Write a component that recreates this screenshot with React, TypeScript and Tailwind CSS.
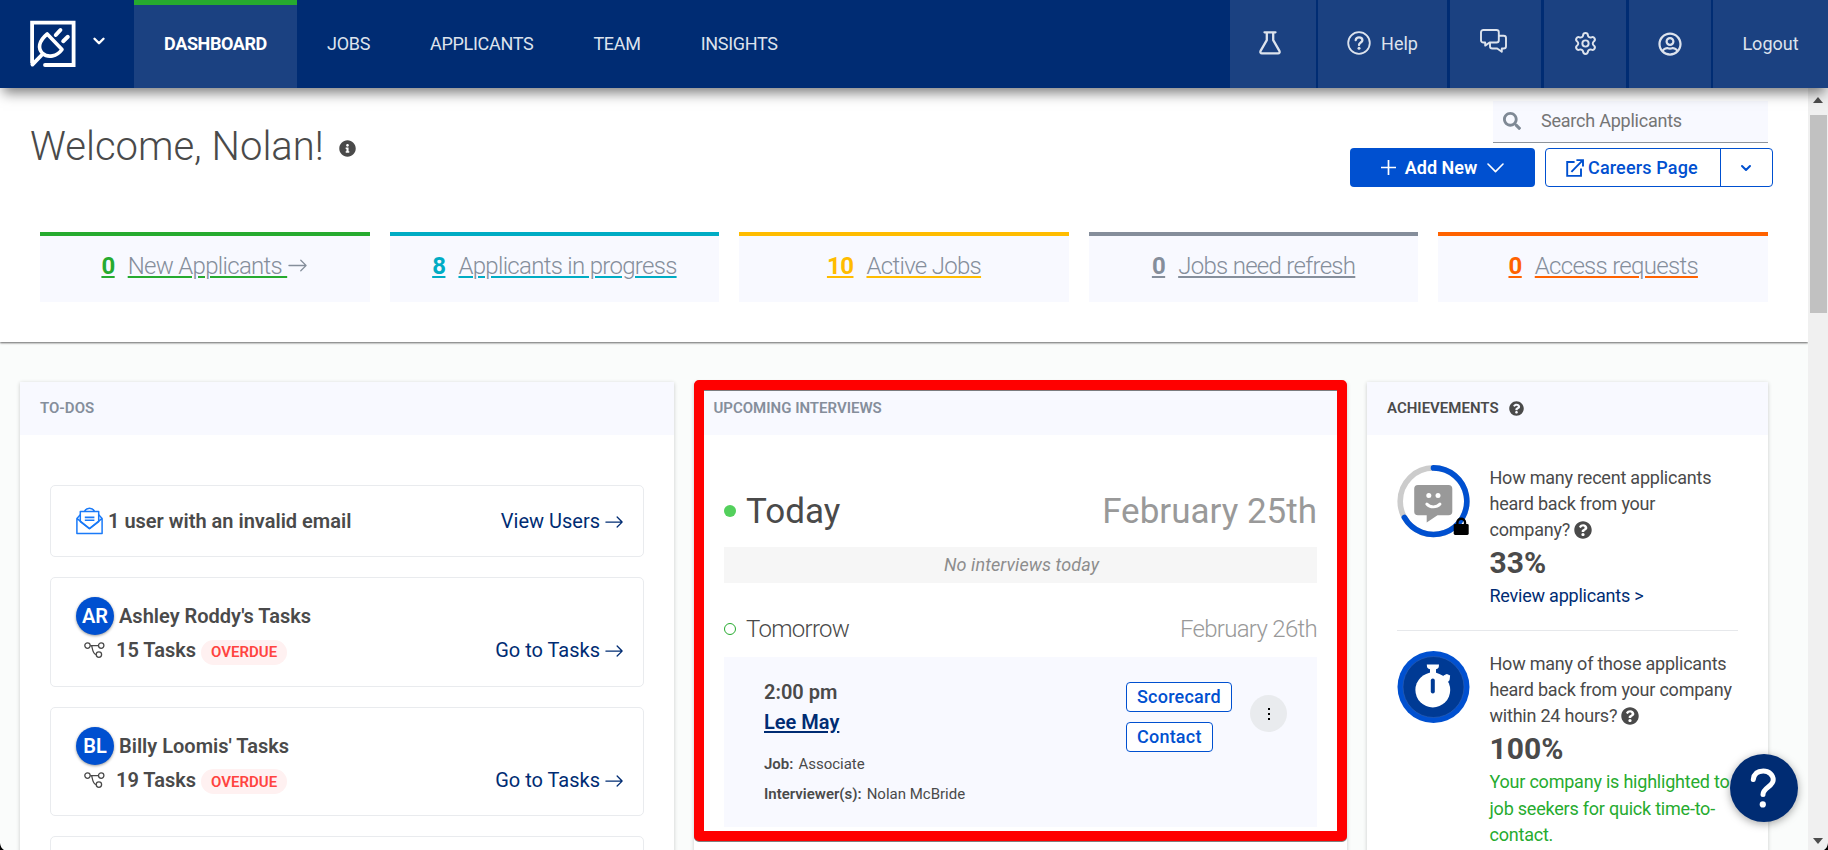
import React from "react";
import { FaInfoCircle, FaQuestionCircle, FaSearch, FaRegUserCircle } from "react-icons/fa";
import { BsArrowRight } from "react-icons/bs";
import { ChevronDown, Settings } from "lucide-react";

function Logo() {
  return (
    <svg viewBox="0 0 48 50" className="h-[50px] w-[48px]" fill="none" stroke="#fff" strokeLinecap="round" strokeLinejoin="round">
      <path d="M16 46H44.6V3.6H3.1V44.5" strokeWidth="3.8" strokeLinecap="butt" strokeLinejoin="miter" />
      <path d="M16 46H44M3.4 45.6L12.5 36.2" strokeWidth="3.8" />
      <path d="M18.2 15L33 30.5C28 37.5 19 39.2 13.6 34.4C8.6 29.4 9.4 22.4 18.2 15Z" strokeWidth="3.6" />
      <path d="M26.8 16L31.4 11M34.2 22.2L38.8 17.8" strokeWidth="4" />
    </svg>
  );
}

function Flask() {
  return (
    <svg viewBox="0 0 22 24" className="h-6 w-[22px]" fill="none" stroke="currentColor" strokeWidth="2.3" strokeLinecap="round" strokeLinejoin="round">
      <path d="M5.5 1.3H16.5M7.8 1.5V9.2L1.6 19.8C1 21.4 1.6 22.4 3 22.4H19C20.4 22.4 21 21.4 20.4 19.8L14.2 9.2V1.5" />
    </svg>
  );
}

function HelpCircle() {
  return (
    <svg viewBox="0 0 24 24" className="h-6 w-6" fill="none" stroke="currentColor" strokeWidth="1.8" strokeLinecap="round">
      <circle cx="12" cy="12" r="10.8" />
      <path d="M8.7 9.2C9 7.2 10.3 6.4 12 6.4C13.9 6.4 15.4 7.4 15.4 9.2C15.4 11.5 12 11.5 12 14" strokeWidth="2.3" />
      <circle cx="12" cy="17.3" r="1.5" fill="currentColor" stroke="none" />
    </svg>
  );
}

function Chats() {
  return (
    <svg viewBox="0 0 27 24" className="h-6 w-[27px]" fill="none" stroke="currentColor" strokeWidth="1.9" strokeLinejoin="round">
      <path d="M3.4 1H16.4C17.9 1 18.8 1.9 18.8 3.3V11.2C18.8 12.6 17.9 13.5 16.4 13.5H9.6L5.2 16.6V13.5H3.4C1.9 13.5 1 12.6 1 11.2V3.3C1 1.9 1.9 1 3.4 1Z" />
      <path d="M19 6.8H23.6C25.1 6.8 26 7.7 26 9.1V17.2C26 18.6 25.1 19.5 23.6 19.5H21.8V22.8L17.2 19.5H12.4C10.9 19.5 10 18.6 10 17.2V13.8" />
    </svg>
  );
}

function ExternalLink() {
  return (
    <svg viewBox="0 0 18 18" className="h-[18px] w-[18px]" fill="none" stroke="currentColor" strokeWidth="1.9">
      <path d="M8.6 3H1.2V16.9H15V9.4" />
      <path d="M5.4 12.8L16.6 1.4M10.4 1.1H17V7.6" />
    </svg>
  );
}

function Envelope() {
  return (
    <svg viewBox="0 0 27 28" className="h-7 w-[27px]" fill="none" stroke="#1a7af8" strokeWidth="1.5" strokeLinejoin="round">
      <path d="M4.3 4.4H22.7V14.6L13.5 21.6L4.3 14.6Z" />
      <path d="M4.3 7.8L.9 11.4V26.6H26.1V11.4L22.7 7.8M.9 11.4L13.5 21.6L26.1 11.4M8.6 4.2C10.4.2 16.6.2 18.4 4.2" />
      <path d="M8.8 10.4H18.4M8.8 13.2H18.4" strokeWidth="1.6" />
    </svg>
  );
}

function Workflow() {
  return (
    <svg viewBox="0 0 21 16" className="h-4 w-[21px]" fill="none" stroke="#4a4a4a" strokeWidth="1.3">
      <circle cx="3.5" cy="3.6" r="2.7" />
      <circle cx="17.2" cy="3.6" r="2.7" />
      <circle cx="14.9" cy="12.6" r="2.7" />
      <path d="M6.2 3.6H14.5M7.6 3.6C8.4 5 8.2 12 12.2 12.6" />
    </svg>
  );
}

function ReplyRing() {
  return (
    <svg viewBox="0 0 73 73" className="h-[73px] w-[73px] shrink-0" fill="none">
      <circle cx="36.5" cy="36.2" r="33.3" stroke="#ccc" strokeWidth="5.6" />
      <path d="M36.5 2.9A33.3 33.3 0 1 1 7.4 52.4" stroke="#0050d0" strokeWidth="5.6" strokeLinecap="round" />
      <path d="M21 20H51.5Q55.3 20 55.3 23.8V46.5Q55.3 50.3 51.5 50.3H40.5L29.7 57.4V50.3H21Q17.2 50.3 17.2 46.5V23.8Q17.2 20 21 20Z" fill="#999" />
      <circle cx="31.8" cy="30.6" r="2.5" fill="#fff" />
      <circle cx="41" cy="30.6" r="2.5" fill="#fff" />
      <path d="M29.8 39C33 42.8 39.6 42.8 43 39" stroke="#fff" strokeWidth="2.9" strokeLinecap="round" />
      <path d="M60.4 60V57.5A3.8 3.8 0 0 1 68 57.5V60" stroke="#000" strokeWidth="2.4" />
      <rect x="56.7" y="59" width="15" height="11" rx="1.4" fill="#000" />
    </svg>
  );
}

function TimerRing() {
  return (
    <svg viewBox="0 0 73 73" className="h-[73px] w-[73px] shrink-0" fill="none">
      <circle cx="36.5" cy="36" r="36" fill="#0050d0" />
      <circle cx="36.5" cy="36" r="30.5" fill="#003a94" stroke="#2f62b4" strokeWidth=".6" />
      <circle cx="35.8" cy="39" r="17.4" fill="#fff" />
      <path d="M29.8 13.6H42Q42 18.2 39 18.2V23H33V18.2Q29.8 18.2 29.8 13.6Z" fill="#fff" />
      <path d="M46 25.5L49.5 23.5L52.6 24.6L52 29.2L50 31.5Z" fill="#fff" stroke="#fff" strokeLinejoin="round" />
      <path d="M35.8 29.5V40.6" stroke="#003a94" strokeWidth="4" strokeLinecap="round" />
    </svg>
  );
}

const navItems = ["JOBS", "APPLICANTS", "TEAM", "INSIGHTS"];

function Header() {
  const cell = "flex h-full items-center justify-center bg-[#1b4181]";
  return (
    <header className="relative z-10 flex h-[88px] items-stretch bg-[#002c73] text-[18px] text-[#dde3ed] shadow-[0_8px_12px_-3px_rgba(0,0,0,0.5)]">
      <div className="flex w-[134px] shrink-0 pl-[29px] pt-[19px]">
        <Logo />
        <ChevronDown className="ml-[12.5px] mt-[13px] h-[18px] w-[18px] text-white" strokeWidth={3.2} />
      </div>
      <a className="flex w-[163px] items-center justify-center border-t-[5px] border-[#26ab2f] bg-[#1b4181] pb-[7px] font-bold tracking-[-0.4px] text-white">DASHBOARD</a>
      {navItems.map((n) => (
        <a key={n} className="flex items-center px-[30px] pb-[2px] tracking-[-0.3px]">{n}</a>
      ))}
      <div className="ml-auto flex">
        <div className={`${cell} mr-[2px] w-[86px] pb-[3px] pr-[6px]`}><Flask /></div>
        <div className={`${cell} mr-[3px] w-[129px] gap-[10px] pb-[2px]`}>
          <HelpCircle />
          <span>Help</span>
        </div>
        <div className={`${cell} mr-[3px] w-[91px] pb-[6px] pr-[5px]`}><Chats /></div>
        <div className={`${cell} mr-[3px] w-[82px] pb-[1px]`}><Settings className="h-[25px] w-[25px]" strokeWidth={1.9} /></div>
        <div className={`${cell} mr-[2px] w-[82px] pb-[1px]`}><FaRegUserCircle className="h-6 w-6" /></div>
        <div className={`${cell} w-[115px] pb-[2px]`}>Logout</div>
      </div>
    </header>
  );
}

const stats = [
  { n: "0", label: "New Applicants ", arrow: true, bar: "border-[#26ab2f]", num: "text-[#26ab2f]", line: "decoration-[#26ab2f]" },
  { n: "8", label: "Applicants in progress", bar: "border-[#00acc4]", num: "text-[#00acc4]", line: "decoration-[#00acc4]" },
  { n: "10", label: "Active Jobs", bar: "border-[#ffbc00]", num: "text-[#ffbc00]", line: "decoration-[#ffbc00]" },
  { n: "0", label: "Jobs need refresh", bar: "border-[#858e9b]", num: "text-[#858e9b]", line: "decoration-[#858e9b]" },
  { n: "0", label: "Access requests", bar: "border-[#ff6200]", num: "text-[#ff6200]", line: "decoration-[#ff6200]" },
];

function Welcome() {
  return (
    <section className="h-[254px] bg-white pl-[30px] pr-[35px] shadow-[0_1px_2px_rgba(0,0,0,0.6)]">
      <div className="flex h-[144px] justify-between">
        <div className="flex items-start pt-[35px]">
          <h1 className="whitespace-nowrap text-[40px] font-light leading-[48px] text-[#4a4a4a]">Welcome, Nolan!</h1>
          <FaInfoCircle className="ml-[15px] mt-[17px] h-[17px] w-[17px] text-[#4a4a4a]" />
        </div>
        <div className="flex flex-col items-end pt-[13px]">
          <div className="mr-[5px] flex h-[42px] w-[275px] items-center border-b border-[#8d939b] bg-[#f8f9ff] pl-[10px] text-[18px] text-[#757575]">
            <FaSearch className="mb-[1px] h-[18px] w-[18px] text-[#7f8995]" />
            <span className="ml-[20px] mt-[-3px] tracking-[-0.23px]">Search Applicants</span>
          </div>
          <div className="mt-[5px] flex h-[39px]">
            <button className="flex w-[185px] items-center justify-center rounded-[4px] bg-[#0050d0] text-[18px] font-semibold text-white">
              <svg viewBox="0 0 15 15" className="mr-[9px] h-[15px] w-[15px]" stroke="#fff" strokeWidth="1.7"><path d="M7.5 0V15M0 7.5H15" /></svg>
              Add New
              <svg viewBox="0 0 17 10" className="ml-[10px] mt-[1px] h-[10px] w-[17px]" fill="none" stroke="#fff" strokeWidth="1.6" strokeLinecap="round" strokeLinejoin="round"><path d="M1 1L8.5 8.6L16 1" /></svg>
            </button>
            <div className="ml-[10px] flex w-[228px] rounded-[4px] border border-[#0050d0] bg-white text-[#0050d0]">
              <div className="flex w-[175px] items-center gap-[4px] border-r border-[#0050d0] pl-[20px] text-[18px] font-medium tracking-[0.15px]">
                <ExternalLink />
                Careers Page
              </div>
              <div className="flex flex-1 items-center justify-center pr-[1px]"><ChevronDown className="h-4 w-4" strokeWidth={3} /></div>
            </div>
          </div>
        </div>
      </div>
      <div className="ml-[10px] mr-[5px] grid grid-cols-5 gap-[20px]">
        {stats.map((s) => (
          <div key={s.label} className={`flex h-[70px] justify-center border-t-4 bg-[#f8f9ff] pt-[16px] text-[24px] leading-[28px] ${s.bar}`}>
            <span className={`mr-[13px] font-bold tracking-[-0.5px] underline decoration-2 underline-offset-[2px] ${s.num} ${s.line}`}>{s.n}</span>
            <span className={`whitespace-pre font-light tracking-[-0.7px] text-[#858e9b] underline decoration-2 underline-offset-[2px] ${s.line}`}>{s.label}</span>
            {s.arrow && <BsArrowRight className="mt-[3px] h-[21px] w-[21px] text-[#858e9b]" />}
          </div>
        ))}
      </div>
    </section>
  );
}

function GoLink({ children }: { children: React.ReactNode }) {
  return (
    <a className="ml-auto flex items-center text-[20px] leading-[26px] text-[#002c73]">
      {children}
      <BsArrowRight className="ml-[4px] mt-[2px] h-[20px] w-[20px]" />
    </a>
  );
}

function TaskCard({ initials, title, tasks }: { initials: string; title: string; tasks: string }) {
  return (
    <div className="mb-[20px] h-[109.5px] shrink-0 rounded-[5px] border border-[#e9ebee] pl-[25px] pr-[19px] pt-[19px]">
      <div className="flex h-[38px] items-center text-[20px] font-semibold text-[#4a4a4a]">
        <span className="mr-[5px] flex h-[38px] w-[38px] items-center justify-center rounded-full bg-[#0050d0] text-white shadow-[0_1px_3px_rgba(0,0,0,0.4)]">{initials}</span>
        {title}
      </div>
      <div className="flex h-[30px] items-center pl-[8px] text-[20px] font-semibold leading-[26px] text-[#4a4a4a]">
        <Workflow />
        <span className="ml-[11px]">{tasks}</span>
        <span className="ml-[5px] mt-[4px] flex h-[25px] w-[86px] items-center justify-center rounded-full bg-[#fff1f1] text-[15px] text-[#ff4440]">OVERDUE</span>
        <GoLink><span className="font-normal">Go to Tasks</span></GoLink>
      </div>
    </div>
  );
}

const panel = "flex h-[520px] flex-col bg-white shadow-[0_1px_4px_rgba(0,0,0,0.2)]";

function Todos() {
  return (
    <section className={`${panel} w-[654px]`}>
      <h2 className="flex h-[53px] shrink-0 items-center bg-[#f8f9ff] pl-[20px] text-[15px] font-semibold text-[#858e9b]">TO-DOS</h2>
      <div className="flex flex-col px-[30px] pt-[50px]">
        <div className="mb-[20px] flex h-[72px] shrink-0 items-center rounded-[5px] border border-[#e9ebee] pl-[25px] pr-[19px]">
          <Envelope />
          <span className="ml-[5px] text-[20px] font-semibold text-[#4a4a4a]">1 user with an invalid email</span>
          <GoLink>View Users</GoLink>
        </div>
        <TaskCard initials="AR" title="Ashley Roddy's Tasks" tasks="15 Tasks" />
        <TaskCard initials="BL" title="Billy Loomis' Tasks" tasks="19 Tasks" />
        <div className="h-[110px] shrink-0 rounded-[5px] border border-[#e9ebee]" />
      </div>
    </section>
  );
}

function Interviews() {
  const btn = "flex h-[30px] items-center rounded-[4px] border border-[#0050d0] bg-white px-[10px] pb-[2px] text-[18px] font-medium tracking-[0.22px] text-[#0050d0]";
  return (
    <section className={`${panel} relative ml-[20px] w-[653px]`}>
      <div className="absolute -top-[2px] left-0 h-[461px] w-[653px] rounded-[5px] border-[10px] border-[#ff0000] drop-shadow-[0_1px_0_rgba(0,0,0,0.5)]" />
      <h2 className="flex h-[53px] shrink-0 items-center bg-[#f8f9ff] pl-[19.5px] text-[15px] font-semibold text-[#858e9b]">UPCOMING INTERVIEWS</h2>
      <div className="px-[30px] pt-[56px]">
        <div className="flex h-[40px] items-center text-[35px] leading-[40px]">
          <span className="h-3 w-3 rounded-full bg-[#53d05c]" />
          <span className="ml-[10px] pt-[2px] text-[#4a4a4a]">Today</span>
          <span className="ml-auto pt-[2px] text-[#999]">February 25th</span>
        </div>
        <div className="mt-[16px] flex h-[36px] items-center justify-center bg-[#f6f6f6] pb-[2px] pl-[2px] text-[18px] italic tracking-[0.1px] text-[#8d8d8d]">No interviews today</div>
        <div className="mt-[32px] flex h-[28px] items-center text-[24px] font-light leading-[28px] tracking-[-0.7px]">
          <span className="h-3 w-3 rounded-full border border-[#26ab2f]" />
          <span className="ml-[10px] text-[#4a4a4a]">Tomorrow</span>
          <span className="ml-auto text-[#999]">February 26th</span>
        </div>
        <div className="mt-[14px] flex h-[170px] bg-[#f8f9ff] pl-[40px] pt-[22px]">
          <div className="text-[#4a4a4a]">
            <div className="text-[20px] font-semibold leading-[26px]">2:00 pm</div>
            <a className="mt-[4px] block text-[20px] font-semibold leading-[26px] text-[#002c73] underline decoration-2 underline-offset-[2px]">Lee May</a>
            <div className="mt-[16px] text-[15px] leading-[26px]"><b className="mr-[5px] font-semibold">Job:</b>Associate</div>
            <div className="mt-[4px] text-[15px] leading-[26px]"><b className="mr-[5px] font-semibold">Interviewer(s):</b>Nolan McBride</div>
          </div>
          <div className="ml-auto flex w-[124px] flex-col items-start gap-[10px] pt-[3px]">
            <div className={btn}>Scorecard</div>
            <div className={btn}>Contact</div>
          </div>
          <div className="mr-[30px] mt-[16px] flex h-[37px] w-[37px] flex-col items-center justify-center gap-[3px] rounded-full bg-[#e9ebee]">
            <i className="h-[2px] w-[2px] bg-black" />
            <i className="h-[2px] w-[2px] bg-black" />
            <i className="h-[2px] w-[2px] bg-black" />
          </div>
        </div>
      </div>
    </section>
  );
}

function Achievements() {
  const q = "mb-[3px] ml-[4px] inline h-[18px] w-[18px] text-[#4a4a4a]";
  return (
    <section className={`${panel} ml-[20px] w-[401px]`}>
      <h2 className="flex h-[53px] shrink-0 items-center bg-[#f8f9ff] pl-[20px] text-[15px] font-semibold text-[#4a4a4a]">
        ACHIEVEMENTS
        <FaQuestionCircle className="mb-[1px] ml-[10px] h-[15px] w-[15px]" />
      </h2>
      <div className="px-[30px] text-[18px] leading-[26px] tracking-[-0.22px] text-[#4a4a4a]">
        <div className="flex h-[196px] border-b border-[#e6e8eb] pt-[30px]">
          <ReplyRing />
          <div className="ml-[19.5px] whitespace-nowrap">
            <p>How many recent applicants<br />heard back from your<br />company?<FaQuestionCircle className={q} /></p>
            <p className="pt-[2px] text-[30px] font-bold leading-[36px] tracking-normal">33%</p>
            <a className="mt-[2px] block text-[#002c73]">Review applicants &gt;</a>
          </div>
        </div>
        <div className="flex pt-[20px]">
          <TimerRing />
          <div className="ml-[19.5px] whitespace-nowrap">
            <p>How many of those applicants<br />heard back from your company<br />within 24 hours?<FaQuestionCircle className={q} /></p>
            <p className="pt-[2px] text-[30px] font-bold leading-[36px] tracking-normal">100%</p>
            <p className="mt-[2px] leading-[26.5px] text-[#26ab2f]">Your company is highlighted to<br />job seekers for quick time-to-<br />contact.</p>
          </div>
        </div>
      </div>
    </section>
  );
}

function Scrollbar() {
  return (
    <div className="flex w-[20px] flex-col items-center bg-[#f0f0f0]">
      <svg viewBox="0 0 10 6" className="mt-[9px] h-[6px] w-[10px]"><path d="M0 6L5 0L10 6Z" fill="#4d4d4d" /></svg>
      <div className="mt-[12px] h-[198px] w-[17px] bg-[#c1c1c1]" />
      <svg viewBox="0 0 10 6" className="mb-[6px] mt-auto h-[6px] w-[10px]"><path d="M0 0L5 6L10 0Z" fill="#4d4d4d" /></svg>
    </div>
  );
}

export default function App() {
  return (
    <div className="relative flex h-[850px] w-[1828px] flex-col overflow-hidden bg-[#fafcfb] font-['Roboto',sans-serif]">
      <Header />
      <div className="flex min-h-0 flex-1">
        <main className="w-[1808px] overflow-hidden">
          <Welcome />
          <div className="flex pl-[20px] pt-[40px]">
            <Todos />
            <Interviews />
            <Achievements />
          </div>
        </main>
        <Scrollbar />
      </div>
      <button className="absolute bottom-[28px] right-[30px] flex h-[68px] w-[68px] items-center justify-center rounded-full bg-[#002c73] shadow-[0_2px_8px_rgba(0,0,0,0.35)]">
        <svg viewBox="0 0 68 68" className="h-[68px] w-[68px]" fill="none">
          <path d="M23.3 25.5C24 19.5 28 17 33.3 17C39 17 43.2 21 43.2 26C43.2 32.5 33 33.5 33 40.5" stroke="#fff" strokeWidth="5" strokeLinecap="round" />
          <circle cx="32.8" cy="50.4" r="3.1" fill="#fff" />
        </svg>
      </button>
      <svg viewBox="0 0 4 7" className="absolute bottom-0 left-0 h-[7px] w-[4px]"><path d="M0 0Q.5 5 4 7H0Z" fill="#000" /></svg>
      <svg viewBox="0 0 4 7" className="absolute bottom-0 right-0 h-[7px] w-[4px]"><path d="M4 0Q3.5 5 0 7H4Z" fill="#000" /></svg>
    </div>
  );
}
